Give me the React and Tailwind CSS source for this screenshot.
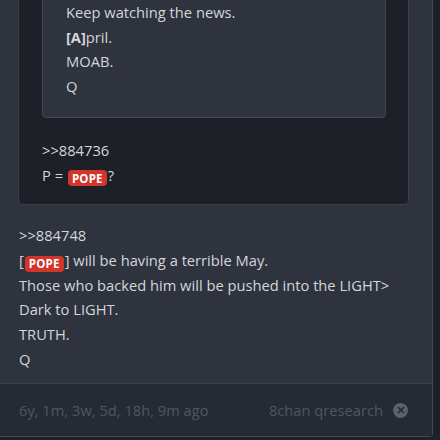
import { X } from "lucide-react";

function Pope() {
  return (
    <span className="mx-[1px] inline-flex h-[16px] items-center rounded-[4px] bg-[#d3342c] px-[4px] align-[-2px] text-[11.5px] font-bold uppercase leading-none tracking-[0.2px] text-white">
      POPE
    </span>
  );
}

export default function App() {
  return (
    <div
      className="h-[440px] w-[440px] overflow-hidden bg-[#1f2128] text-[14.7px] leading-[24.7px] text-[#d3d6db]"
      style={{ fontFamily: '"Open Sans", "Liberation Sans", sans-serif' }}
    >
      <div className="-mt-[38px] w-[433px] rounded-br-[4px] border-b border-r border-[#434955] bg-[#2e333d]">
        <div className="px-[18px] pb-[12px] pt-0">
          {/* quoted post */}
          <div className="w-[391px] rounded-[4px] border border-[#3a3f4a] bg-[#1e2027] pb-[17px] pl-[23px] pr-[22px] pt-[18px]">
            <div className="mb-[20px] w-[344px] rounded-[4px] border border-[#434955] bg-[#2e333d] py-[18px] pl-[23px]">
              <div>Keep watching the news.</div>
              <div>
                <b>[A]</b>pril.
              </div>
              <div>MOAB.</div>
              <div>Q</div>
            </div>
            <div>&gt;&gt;884736</div>
            <div>
              P = <Pope />?
            </div>
          </div>

          <div className="mt-[18px] pl-[1px]">
            <div>&gt;&gt;884748</div>
            <div>
              [<Pope />] will be having a terrible May.
            </div>
            <div>Those who backed him will be pushed into the LIGHT&gt;</div>
            <div>Dark to LIGHT.</div>
            <div>TRUTH.</div>
            <div>Q</div>
          </div>
        </div>

        <div className="flex h-[53px] items-center justify-between border-t border-[#3b404b] bg-[#262a33] pl-[19px] pr-[24px] text-[#505663]">
          <span>6y, 1m, 3w, 5d, 18h, 9m ago</span>
          <span className="flex items-center gap-[10px]">
            <span>8chan qresearch</span>
            <span className="flex h-[15px] w-[15px] items-center justify-center rounded-full bg-[#5c616d]">
              <X size={10} strokeWidth={4} color="#262a33" />
            </span>
          </span>
        </div>
      </div>
    </div>
  );
}
